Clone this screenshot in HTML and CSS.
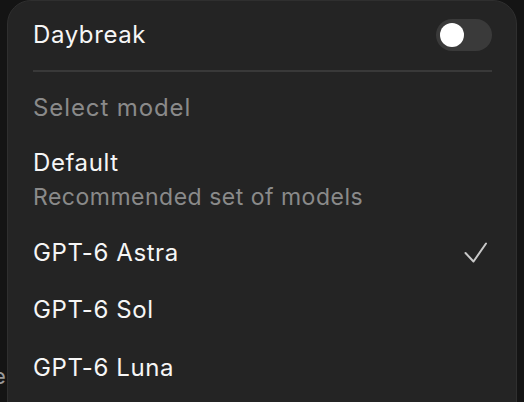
FILE: index.html
```html
<!DOCTYPE html>
<html>
<head>
<meta charset="utf-8">
<link rel="stylesheet" href="styles.css">
</head>
<body>
<div class="page">
  <div class="page-line">e</div>
</div>
<div class="menu">
  <div class="toggle-row">
    <span class="title">Daybreak</span>
    <span class="switch"><span class="knob"></span></span>
  </div>
  <div class="divider"></div>
  <div class="section-label">Select model</div>
  <div class="item item-first">
    <div class="title">Default</div>
    <div class="subtitle">Recommended set of models</div>
  </div>
  <div class="item item-row">
    <span class="title">GPT-6 Astra</span>
    <svg class="check" width="24" height="24" viewBox="0 0 24 24"><path d="M1.5 12 L9.5 20.5 L22 2.5" fill="none" stroke="#c9c9c9" stroke-width="2" stroke-linecap="round" stroke-linejoin="round"/></svg>
  </div>
  <div class="item"><span class="title">GPT-6 Sol</span></div>
  <div class="item item-last"><span class="title">GPT-6 Luna</span></div>
</div>
</body>
</html>
```
FILE: styles.css
```css
html, body {
  margin: 0;
  padding: 0;
  width: 524px;
  height: 402px;
  overflow: hidden;
  background: #141414;
  font-family: Inter, "Noto Sans", sans-serif;
}
.page {
  display: flex;
  flex-direction: column;
  justify-content: flex-end;
  height: 402px;
}
.page-line {
  margin: 0 0 12px -7px;
  font-size: 22px;
  line-height: 28px;
  color: #9a9a9a;
  white-space: nowrap;
}
.menu {
  position: absolute;
  left: 7px;
  top: 0;
  width: 510px;
  height: 440px;
  box-sizing: border-box;
  padding: 0 24px 0 25px;
  background: #242424;
  border: 1px solid #2f2f2f;
  border-radius: 24px;
  display: flex;
  flex-direction: column;
}
.title {
  font-size: 24px;
  line-height: 28px;
  letter-spacing: 0.6px;
  color: #f6f6f6;
}
.toggle-row {
  height: 68px;
  display: flex;
  align-items: center;
  justify-content: space-between;
}
.switch {
  width: 56px;
  height: 32px;
  border-radius: 16px;
  background: #3a3a3a;
  display: flex;
  align-items: center;
  padding: 0 4px;
  box-sizing: border-box;
}
.knob {
  width: 24px;
  height: 24px;
  border-radius: 50%;
  background: #ffffff;
}
.divider {
  height: 2px;
  margin-top: 1px;
  background: #393939;
}
.section-label {
  padding: 22px 0 13px;
  font-size: 24px;
  line-height: 28px;
  letter-spacing: 0.9px;
  color: #8a8a8a;
}
.item {
  padding: 14px 0 15px;
  display: flex;
  align-items: center;
  justify-content: space-between;
}
.item-first {
  display: block;
  padding-bottom: 14px;
}
.item-last {
  padding-top: 15px;
}
.subtitle {
  margin-top: 6px;
  font-size: 23px;
  line-height: 28px;
  letter-spacing: 0.5px;
  color: #8a8a8a;
}
.check {
  margin-right: 4px;
}
```
